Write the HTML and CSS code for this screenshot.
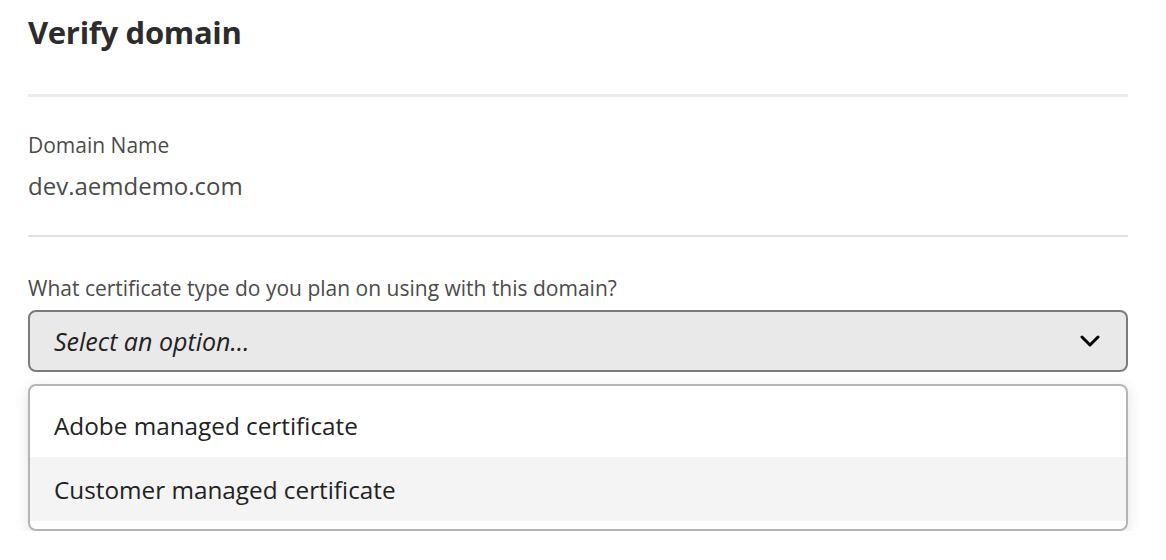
FILE: index.html
```html
<!DOCTYPE html>
<html lang="en">
<head>
<meta charset="utf-8">
<title>Verify domain</title>
<link rel="stylesheet" href="styles.css">
</head>
<body>
<div class="dialog">
  <header class="header">
    <h1 class="title">Verify domain</h1>
  </header>
  <section class="field field-domain">
    <div class="label">Domain Name</div>
    <div class="value">dev.aemdemo.com</div>
  </section>
  <section class="field field-cert">
    <div class="label">What certificate type do you plan on using with this domain?</div>
    <button class="picker" type="button">
      <span class="placeholder">Select an option…</span>
      <svg class="chevron" width="20" height="12" viewBox="0 0 20 12" aria-hidden="true">
        <path d="M2 2 L10 10 L18 2" fill="none" stroke="#000" stroke-width="3" stroke-linecap="round" stroke-linejoin="round"/>
      </svg>
    </button>
    <ul class="menu">
      <li class="option option-first">Adobe managed certificate</li>
      <li class="option option-hover">Customer managed certificate</li>
    </ul>
  </section>
</div>
</body>
</html>
```

FILE: styles.css
```css
* { box-sizing: border-box; }
html, body { margin: 0; padding: 0; background: #fff; }
body {
  font-family: "Open Sans", "Noto Sans", sans-serif;
  color: #2c2c2c;
}
.dialog {
  display: flex;
  flex-direction: column;
  padding: 0 38px 0 28px;
  width: 1166px;
}
.header {
  border-bottom: 3px solid #ebebeb;
  padding-top: 12px;
  height: 97px;
}
.title {
  margin: 0;
  font-size: 31px;
  line-height: 40px;
  font-weight: 700;
  color: #2c2c2c;
  letter-spacing: -0.3px;
}
.field-domain {
  border-bottom: 2px solid #e1e1e1;
  padding-top: 35px;
  height: 140px;
}
.label {
  font-size: 21px;
  line-height: 26px;
  color: #4b4b4b;
}
.value {
  margin-top: 12px;
  font-size: 24px;
  line-height: 32px;
  color: #4b4b4b;
}
.field-cert {
  display: flex;
  flex-direction: column;
  padding-top: 38px;
}
.field-cert .label {
  margin-bottom: 9px;
}
.picker {
  display: flex;
  align-items: center;
  justify-content: space-between;
  width: 100%;
  height: 62px;
  padding: 0 26px 0 24px;
  background: #e9e9e9;
  border: 2px solid #7b7b7b;
  border-radius: 8px;
  font-family: inherit;
  cursor: pointer;
}
.placeholder {
  font-style: italic;
  font-size: 25px;
  color: #222;
}
.chevron { display: block; }
.menu {
  display: flex;
  flex-direction: column;
  margin: 12px 0 0;
  padding: 0 0 8px;
  list-style: none;
  background: #fff;
  border: 2px solid #b4b4b4;
  border-radius: 8px;
  box-shadow: 0 3px 14px rgba(0, 0, 0, 0.12);
  overflow: hidden;
}
.option {
  display: flex;
  align-items: center;
  padding: 0 24px;
  font-size: 24.3px;
  color: #222;
}
.option-first {
  height: 71px;
  padding-top: 8px;
}
.option-hover {
  height: 64px;
  background: #f4f4f4;
}
```
